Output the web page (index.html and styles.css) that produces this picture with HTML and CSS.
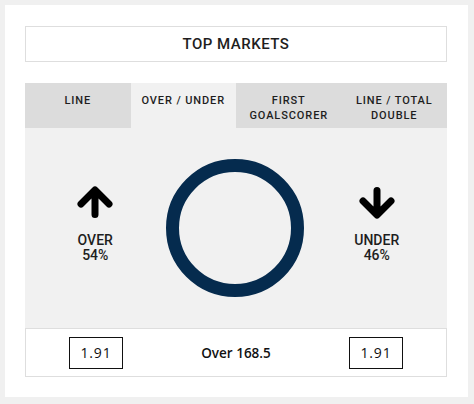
FILE: index.html
```html
<!DOCTYPE html>
<html lang="en">

<head>
    <meta charset="UTF-8">
    <meta name="viewport" content="width=device-width, initial-scale=1.0">
    <title>Top Markets</title>

    <link rel="stylesheet" href="styles.css">
</head>

<body>
    <div class="card">
        <div class="title">TOP MARKETS</div>

        <div class="tabs">
            <span class="tab">LINE</span>
            <span class="tab active">OVER / UNDER</span>
            <span class="tab">FIRST<br>GOALSCORER</span>
            <span class="tab">LINE / TOTAL<br>DOUBLE</span>
        </div>

        <div class="market">
            <div class="side">
                <svg class="arrow" width="36" height="33" viewBox="0 0 36 33">
                    <path d="M18 28.5 V5 M4 18 L18 4 L32 18" />
                </svg>
                <div class="label">OVER<br>54%</div>
            </div>

            <div class="ring">
                <svg width="138" height="138" viewBox="0 0 138 138">
                    <circle cx="69" cy="69" r="62.5" />
                </svg>
            </div>

            <div class="side">
                <svg class="arrow" width="36" height="33" viewBox="0 0 36 33">
                    <path d="M18 4.5 V28 M4 15 L18 29 L32 15" />
                </svg>
                <div class="label">UNDER<br>46%</div>
            </div>
        </div>

        <div class="odds">
            <div class="cell"><span class="price">1.91</span></div>
            <div class="cell line">Over 168.5</div>
            <div class="cell"><span class="price">1.91</span></div>
        </div>
    </div>
</body>

</html>
```

FILE: styles.css
```css
body {
    margin: 0;
    padding: 5px;
    background: #f0f0f0;
    font-family: Roboto, "Liberation Sans", sans-serif;
    color: #1e1e1e;
}

.card {
    width: 463px;
    box-sizing: border-box;
    background: #fff;
    padding: 21px 21px 20px 20px;
}

.title {
    height: 36px;
    box-sizing: border-box;
    border: 1px solid #dedede;
    display: flex;
    align-items: center;
    justify-content: center;
    font-size: 15px;
    font-weight: 500;
    letter-spacing: 0.5px;
    margin-bottom: 21px;
}

/* tabs */
.tabs {
    display: grid;
    grid-template-columns: repeat(4, 1fr);
    background: #dcdcdc;
}

.tab {
    height: 45px;
    box-sizing: border-box;
    padding-top: 10px;
    text-align: center;
    font-size: 11px;
    line-height: 15px;
    font-weight: 500;
    letter-spacing: 0.9px;
}

.tab.active {
    background: #f1f1f1;
}

/* chart area */
.market {
    display: grid;
    grid-template-columns: repeat(3, 1fr);
    align-items: center;
    height: 200px;
    background: #f1f1f1;
}

.side {
    display: flex;
    flex-direction: column;
    align-items: center;
    padding-bottom: 7px;
}

.arrow {
    display: block;
    margin-bottom: 14px;
}

.arrow path {
    fill: none;
    stroke: #000;
    stroke-width: 7;
    stroke-linecap: round;
    stroke-linejoin: round;
}

.label {
    text-align: center;
    font-size: 14px;
    line-height: 15px;
    font-weight: 500;
}

.ring {
    display: flex;
    justify-content: center;
    padding-right: 3px;
}

.ring svg {
    display: block;
}

.ring circle {
    fill: none;
    stroke: #052b4e;
    stroke-width: 13;
}

/* odds row */
.odds {
    display: grid;
    grid-template-columns: repeat(3, 1fr);
    align-items: center;
    height: 49px;
    box-sizing: border-box;
    border: 1px solid #dedede;
    font-family: "Open Sans", "Liberation Sans", sans-serif;
    color: #111;
}

.cell {
    display: flex;
    justify-content: center;
}

.price {
    width: 54px;
    height: 32px;
    box-sizing: border-box;
    border: 1px solid #111;
    display: flex;
    align-items: center;
    justify-content: center;
    font-size: 14px;
    font-weight: 500;
    letter-spacing: 0.8px;
}

.line {
    font-size: 13.5px;
    font-weight: 600;
}
```
